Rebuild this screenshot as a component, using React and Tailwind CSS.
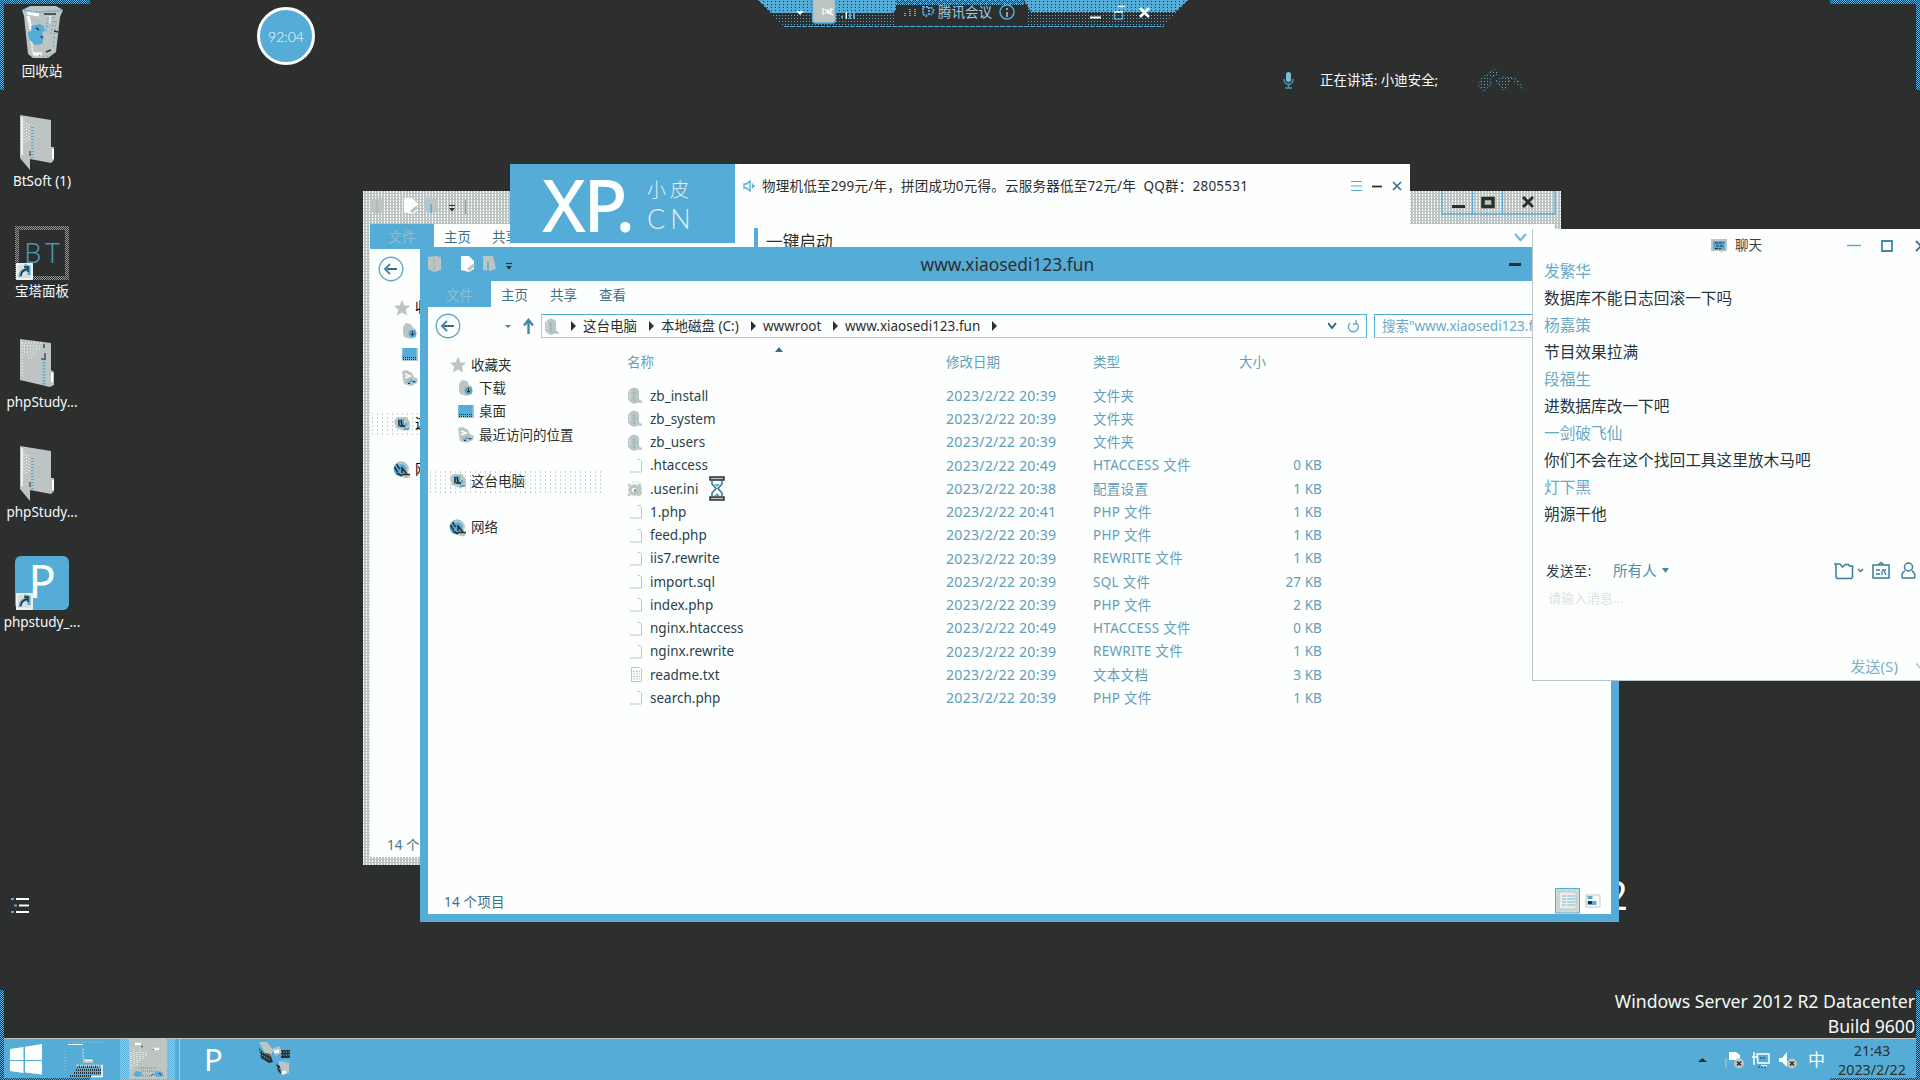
import React from "react";

const checker = "bg-[repeating-conic-gradient(#2d2f2e_0_25%,#55acd6_0_50%)] bg-size-[2px_2px]";
const greyDots = "bg-[conic-gradient(#bcc5c3_0_75%,#fdfffe_0_100%)] bg-size-[3px_3px]";
const faintDots = "bg-[radial-gradient(#bcc5c3_0.6px,transparent_0.7px)] bg-size-[5px_4px]";

const files = [
  ["zb_install", "2023/2/22 20:39", "文件夹", "", "folder"],
  ["zb_system", "2023/2/22 20:39", "文件夹", "", "folder"],
  ["zb_users", "2023/2/22 20:39", "文件夹", "", "folder"],
  [".htaccess", "2023/2/22 20:49", "HTACCESS 文件", "0 KB", "page"],
  [".user.ini", "2023/2/22 20:38", "配置设置", "1 KB", "gear"],
  ["1.php", "2023/2/22 20:41", "PHP 文件", "1 KB", "page"],
  ["feed.php", "2023/2/22 20:39", "PHP 文件", "1 KB", "page"],
  ["iis7.rewrite", "2023/2/22 20:39", "REWRITE 文件", "1 KB", "page"],
  ["import.sql", "2023/2/22 20:39", "SQL 文件", "27 KB", "page"],
  ["index.php", "2023/2/22 20:39", "PHP 文件", "2 KB", "page"],
  ["nginx.htaccess", "2023/2/22 20:49", "HTACCESS 文件", "0 KB", "page"],
  ["nginx.rewrite", "2023/2/22 20:39", "REWRITE 文件", "1 KB", "page"],
  ["readme.txt", "2023/2/22 20:39", "文本文档", "3 KB", "text"],
  ["search.php", "2023/2/22 20:39", "PHP 文件", "1 KB", "page"],
];

const chat = [
  ["发繁华", "数据库不能日志回滚一下吗"],
  ["杨嘉策", "节目效果拉满"],
  ["段福生", "进数据库改一下吧"],
  ["一剑破飞仙", "你们不会在这个找回工具这里放木马吧"],
  ["灯下黑", "朔源干他"],
];

function SmallFolder({ className = "" }) {
  return (
    <svg className={`shrink-0 ${className}`} width="16" height="17" viewBox="0 0 16 17">
      <path d="M1 4.500 4 1.500 7 .5l4 1.500 1 2v8l3 2.500V16l-4-.5-4 1.500-4-2-2-3z" fill="#bcc5c3" />
      <path d="M7 5v10" stroke="#55acd6" strokeDasharray="1.500 1" />
      <path d="M3 4v8" stroke="#fdfffe" strokeDasharray="1 1" />
    </svg>
  );
}

function FileIcon({ kind }) {
  if (kind === "folder") return <SmallFolder />;
  if (kind === "gear")
    return (
      <svg className="shrink-0" width="16" height="17" viewBox="0 0 16 17">
        <path d="M5 2h7l2.500 2.500V15H9" fill="none" stroke="#bcc5c3" strokeDasharray="1 1" />
        <circle cx="7" cy="10" r="4" fill="#fdfffe" stroke="#bcc5c3" strokeWidth="3.500" />
        <path d="M1 6l2-2m8 0 2 2v8l-3 2M1 14l2 2" stroke="#bcc5c3" strokeWidth="2" fill="none" />
        <path d="M7 9h2v3H7z" fill="#55acd6" />
      </svg>
    );
  return (
    <svg className="shrink-0" width="16" height="17" viewBox="0 0 16 17">
      {kind === "text" ? (
        <g fill="none" stroke="#bcc5c3">
          <path d="M4.500 1.500h8l2 2v12h-10z" />
          <path d="M6 5.500h7M6 8h7M6 10.500h7M6 13h7" strokeDasharray="2 1" />
        </g>
      ) : (
        <path d="M11 2.500h2l1.500 2v10.500H3" fill="none" stroke="#bcc5c3" />
      )}
    </svg>
  );
}

function NavIcon({ kind }) {
  return (
    <svg className="shrink-0" width="18" height="18" viewBox="0 0 18 18">
      {kind === "star" && (
        <path d="M9 .8l2.300 5.400 6 .5-4.500 3.900 1.400 5.900L9 13.400l-5.200 3.100 1.400-5.900L.8 6.700l6-.5z" fill="#bcc5c3" />
      )}
      {kind === "download" && (
        <g>
          <path d="M2 5l3-4 5 1 2 4 3 2v7l-5 2-7-2-1-4z" fill="#bcc5c3" />
          <circle cx="11.500" cy="11.500" r="4" fill="#55acd6" />
          <path d="M11.500 9v4m-2-1.500 2 2 2-2" stroke="#2d2f2e" fill="none" />
        </g>
      )}
      {kind === "desktop" && (
        <g>
          <path d="M1 3h16v13H1z" fill="#bcc5c3" />
          <path d="M1.500 3h14v11.500h-14z" fill="#55acd6" />
          <path d="M2 12.500h13M2 14.500h13" stroke="#2d2f2e" strokeDasharray="1 1" />
        </g>
      )}
      {kind === "recent" && (
        <g>
          <path d="M1 2l5-1 5 3 2 4 4 2-1 4-6 3-7-2-1-5z" fill="#bcc5c3" />
          <path d="M4 5l5 2-5 2" fill="none" stroke="#fdfffe" strokeWidth="1.500" />
          <path d="M6 13h3l1-2 2 2h3" fill="none" stroke="#55acd6" strokeWidth="1.500" />
          <path d="M7 14.500h2m3-2h2" stroke="#2d2f2e" />
        </g>
      )}
      {kind === "pc" && (
        <g>
          <path d="M1 6l3-4h9l4 5v7l-5 2-9-3z" fill="#bcc5c3" />
          <path d="M5 4h6v8H5z" fill="#55acd6" />
          <path d="M6 5v6m2-6 1 5 3 2M7 11h5" fill="none" stroke="#2d2f2e" strokeWidth="1.500" />
          <path d="M11 14h5M13 8v3" stroke="#55acd6" strokeWidth="2" />
        </g>
      )}
      {kind === "network" && (
        <g>
          <circle cx="8" cy="8" r="7.500" fill="#55acd6" />
          <path d="M4 4l3-2 5 1 3 4-1 4" fill="none" stroke="#bcc5c3" strokeWidth="2.200" />
          <path d="M1.500 6l3 5M4 3l1 3 2 2M4 12l5 3M9 6v6m0-5 5 6" fill="none" stroke="#2d2f2e" strokeWidth="1.500" />
          <path d="M10 13h7v3l-3 1.500-4-1z" fill="#bcc5c3" />
          <path d="M9 13.500h8" stroke="#2d2f2e" strokeWidth="1.500" />
        </g>
      )}
    </svg>
  );
}

function BackButton() {
  return (
    <svg className="shrink-0" width="26" height="26" viewBox="0 0 26 26" fill="none">
      <circle cx="13" cy="13" r="11.800" stroke="#68a8c5" strokeWidth="1.400" fill="#fdfffe" />
      <path d="M19 13H8m4-5-5 5 5 5" stroke="#4b87a4" strokeWidth="2" />
      <path d="M18 13H9" stroke="#2d2f2e" strokeDasharray="2 1" />
    </svg>
  );
}

function QuickTools() {
  return (
    <svg className="shrink-0" width="90" height="22" viewBox="0 0 90 22">
      <path d="M0 4l8-1 5 1v13l-7 2-6-3z" fill="#bcc5c3" />
      <path d="M6 6v11" stroke="#55acd6" strokeDasharray="1 1" />
      <path d="M33 3h8l5 5v8l-5 3-8-2z" fill="#fdfffe" />
      <path d="M40 17l6-5" stroke="#bcc5c3" strokeWidth="3" />
      <path d="M55 3h10l3 13-6 2-7-1z" fill="#bcc5c3" />
      <path d="M60 9v9" stroke="#55acd6" strokeWidth="1.500" />
      <path d="M78 10.500h6" stroke="#2d2f2e" strokeWidth="1.200" />
      <path d="M78 13h6l-3 3.500z" fill="#2d2f2e" />
    </svg>
  );
}

function Arrow() {
  return (
    <svg className="shrink-0" width="5" height="10" viewBox="0 0 5 10">
      <path d="M0 0l5 5-5 5z" fill="#2d2f2e" />
    </svg>
  );
}

function FolderBig({ zip }) {
  return (
    <svg width="36" height="56" viewBox="0 0 36 56">
      {zip ? (
        <g>
          <path d="M1 0l31 4v27l3 2v13l-4 2-30-7z" fill="#bcc5c3" />
          <path d="M3 3v34" stroke="#fdfffe" strokeDasharray="1 2" />
          <path d="M3 4h20M5 7h18M5 10h16M5 13h14M8 16h9M9 19h5" stroke="#fdfffe" strokeDasharray="1 2" />
          <path d="M25 20v26" stroke="#55acd6" strokeWidth="2.500" strokeDasharray="1.500 1.500" />
          <path d="M25 5v4m1 5v7m-4-1h3" stroke="#2d2f2e" strokeWidth="1.200" />
          <path d="M33 34v9" stroke="#fdfffe" strokeWidth="2" />
        </g>
      ) : (
        <g>
          <path d="M1 0l31 5v27h3v13l-3 3-21-4v11L1 43z" fill="#bcc5c3" />
          <path d="M3 2v38" stroke="#fdfffe" strokeWidth="1.500" />
          <path d="M5 6v24M7.500 8v20M10 9v17" stroke="#fdfffe" strokeDasharray="1 2" />
          <path d="M13.500 12v31" stroke="#55acd6" strokeWidth="3" strokeDasharray="1 2" />
          <path d="M11 36v5" stroke="#2d2f2e" />
          <path d="M34 34v10" stroke="#fdfffe" strokeWidth="2" />
        </g>
      )}
    </svg>
  );
}

function Shortcut() {
  return (
    <svg className="absolute bottom-0 left-px" width="17" height="17" viewBox="0 0 17 17">
      <path d="M0 0h17v17H0z" fill="#d9dfdd" />
      <path d="M1 1h15v15H1z" fill="none" stroke="#fdfffe" />
      <path d="M4 14c0-5 2-7 6-7V3l3 1v8" fill="none" stroke="#55acd6" strokeWidth="3" />
      <path d="M5 13c0-4 2-6 6-7M8 4h4v5" fill="none" stroke="#2d2f2e" strokeWidth="1.500" />
    </svg>
  );
}

function DesktopItem({ label, pad, children }) {
  return (
    <div className="flex h-[110.2px] w-[84px] flex-col items-center">
      <div className={`flex h-[61px] w-[54px] shrink-0 items-start ${pad}`}>{children}</div>
      <div className="h-5 whitespace-nowrap text-[13.5px] leading-5 text-[#f4f9fb]">{label}</div>
    </div>
  );
}

function Desktop() {
  return (
    <div className="absolute left-0 top-0 flex flex-col">
      <DesktopItem label="回收站" pad="pt-[6px] pl-[7px]">
        <svg width="42" height="52" viewBox="0 0 42 52">
          <path d="M0 4l8-4h26l7 4-3 7-4 35-8 6H11l-5-4L2 10z" fill="#bcc5c3" />
          <path d="M2 4l10 2 24-1 4-1" fill="none" stroke="#55acd6" strokeWidth="1.500" strokeDasharray="2 1" />
          <path d="M5 7l12 2M6 10l3 12M11 48h9" stroke="#fdfffe" strokeWidth="3" />
          <path d="M8 22l3 26M28 10v8" stroke="#fdfffe" strokeWidth="2" strokeDasharray="1 1" />
          <path d="M22 8h12" stroke="#2d2f2e" strokeWidth="1.500" />
          <path d="M9 20l9-2 4 3 1 3-3 3 2 4-2 7-7 1-6-6-1-7 4-2z" fill="#55acd6" />
          <path d="M26 12l-2 14m8-15-3 17m5-13-3 26m-14 8 7 2 7-3M20 20h8" stroke="#55acd6" strokeWidth="1.500" strokeDasharray="1.500 2.500" fill="none" />
          <path d="M14 22l3 2m2 6 1 2m12-7 4 1m-12 20 5-2" stroke="#2d2f2e" strokeWidth="1.500" />
        </svg>
      </DesktopItem>
      <DesktopItem label="BtSoft (1)" pad="pt-[5px] pl-[4px]"><FolderBig /></DesktopItem>
      <DesktopItem label="宝塔面板" pad="pt-[6px]">
        <div className={`relative h-[54px] w-[54px] p-1 ${checker}`}>
          <div className="flex h-[46px] items-center justify-center bg-[#2d2f2e] pl-1 font-['Noto_Sans'] text-[27px] font-light tracking-[4px] text-[#4a94b7]">BT</div>
          <Shortcut />
        </div>
      </DesktopItem>
      <DesktopItem label="phpStudy..." pad="pt-[8px] pl-[4px]"><FolderBig zip /></DesktopItem>
      <DesktopItem label="phpStudy..." pad="pt-[5px] pl-[4px]"><FolderBig /></DesktopItem>
      <DesktopItem label="phpstudy_..." pad="pt-[5px]">
        <div className="relative flex h-[54px] w-[54px] items-center justify-center rounded-md bg-[#55acd6] pb-1 font-['Noto_Sans'] text-[45px] leading-none text-[#fdfffe]">
          P
          <Shortcut />
        </div>
      </DesktopItem>
    </div>
  );
}

function MeetingBar() {
  return (
    <div className="absolute left-[758px] top-0 h-[28px] w-[430px]">
      <svg className="absolute inset-0" width="430" height="28" viewBox="0 0 430 28">
        <defs>
          <pattern id="dither" width="2" height="2" patternUnits="userSpaceOnUse">
            <path d="M0 0h1v1H0zM1 1h1v1H1z" fill="#55acd6" />
          </pattern>
          <pattern id="sparse" width="3" height="3" patternUnits="userSpaceOnUse">
            <path d="M0 0h1v1H0z" fill="#55acd6" />
          </pattern>
          <pattern id="dense" width="4" height="3" patternUnits="userSpaceOnUse">
            <path d="M0 0h4v3H0z" fill="#55acd6" />
            <path d="M1 1h1v1H1z" fill="#2d2f2e" />
          </pattern>
        </defs>
        <path d="M0 0h430l-22 24-4 3H28l-5-2z" fill="url(#sparse)" />
        <path d="M0 0h138v10l-4 3H14zM266 0h164l-13 12H273z" fill="url(#dense)" />
        <path d="M138 0h128v5H138z" fill="url(#dither)" />
        <path d="M138 6h130v19H138z" fill="#2d2f2e" />
        <path d="M26 26.500h380" stroke="#55acd6" strokeDasharray="5 1" />
        <path d="M38 11h8l-4 4z" fill="#fdfffe" />
        <rect x="54.500" y="-5" width="23" height="28" rx="3" fill="#bcc5c3" stroke="#55acd6" strokeWidth="1.500" />
        <path d="M65 8v7m2-6 4 5m0-5-4 5m6-6v7m2-6-5 3 5 3" stroke="#fdfffe" fill="none" strokeWidth="1.200" />
        <path d="M84 18v-2m4 3v-7m4 7v-9m4 9V9" stroke="#55acd6" strokeWidth="2" />
        <path d="M88.500 12v7" stroke="#fdfffe" />
        <path d="M147 16v-4m5 4V9m5 7V9" stroke="#55acd6" strokeWidth="2" strokeDasharray="1 1" />
        <path d="M165 7h6v7l-3 2-3-2zM173 7l3 4-3 4" fill="none" stroke="#55acd6" strokeWidth="2" strokeDasharray="2 1" />
        <circle cx="249" cy="12" r="7" fill="none" stroke="#55acd6" strokeWidth="1.500" />
        <path d="M249 8v2m0 2v5" stroke="#bcc5c3" strokeWidth="1.500" />
        <path d="M332 17.500h11" stroke="#fdfffe" strokeWidth="2" />
        <path d="M360 6.500h7M356 12h9" stroke="#fdfffe" strokeWidth="1.600" fill="none" />
        <path d="M356.500 13v6h8v-6" stroke="#55acd6" strokeWidth="1.500" fill="none" />
        <path d="M382 8l9 9m0-9-9 9" stroke="#fdfffe" strokeWidth="2.500" />
      </svg>
      <div className="relative pl-[180px] text-[13.5px] leading-6 text-[#9ccbe2]">腾讯会议</div>
    </div>
  );
}

function BackWindow() {
  return (
    <div className={`absolute left-[363px] top-[191px] flex h-[674px] w-[1198px] flex-col ${greyDots} px-[7px] pb-[8px]`}>
      <div className="flex h-[33px] shrink-0 items-start">
        <div className="pl-[1px] pt-[4px]"><QuickTools /></div>
        <div className="ml-[4px] mt-[9px] h-[14px] w-px bg-[#55acd6]" />
        <svg className="ml-auto mr-[-4px]" width="117" height="24" viewBox="0 0 117 24">
          <path d="M1 0v23h113V0M31.500 0v23M61.500 0v23" fill="none" stroke="#55acd6" strokeWidth="1.300" />
          <path d="M11 15.500h13" stroke="#2d2f2e" strokeWidth="3" />
          <path d="M42 7.500h10v8H42z" fill="#bcc5c3" stroke="#2d2f2e" strokeWidth="3.500" />
          <path d="M82 6l10 10m0-10L82 16" stroke="#2d2f2e" strokeWidth="3" />
        </svg>
      </div>
      <div className="flex h-[25px] shrink-0 items-center bg-[#fdfffe] text-[13.5px] text-[#3f7088]">
        <div className="flex h-full w-[64px] items-center justify-center bg-[#55acd6] pt-[2px] text-[#8fbdd0]">文件</div>
        <span className="ml-[10px] pt-[2px]">主页</span>
        <span className="ml-[21px] pt-[2px]">共享</span>
        <svg className="ml-auto mr-[27px]" width="13" height="10" viewBox="0 0 13 10"><path d="M1 2l5.500 6L12 2" fill="none" stroke="#7db8d0" strokeWidth="2.200" /></svg>
      </div>
      <div className="flex grow flex-col bg-[#fdfffe] text-[13.5px] leading-[23.3px]">
        <div className="flex h-[47px] items-center pb-[8px] pl-[8px]"><BackButton /></div>
        <div className="flex items-center gap-1 pl-[23px]"><NavIcon kind="star" />收藏夹</div>
        <div className="flex h-[23.3px] items-center pl-[31px]"><NavIcon kind="download" /></div>
        <div className="flex h-[23.3px] items-center pl-[31px]"><NavIcon kind="desktop" /></div>
        <div className="flex h-[23.3px] items-center pl-[31px]"><NavIcon kind="recent" /></div>
        <div className="h-[23px]" />
        <div className={`flex items-center gap-1 pl-[23px] ${faintDots}`}><NavIcon kind="pc" />这台电脑</div>
        <div className="h-[23px]" />
        <div className="flex items-center gap-1 pl-[23px]"><NavIcon kind="network" />网络</div>
        <div className="mt-auto pl-[17px] leading-6 text-[#46788f]">14 个项目</div>
      </div>
    </div>
  );
}

function PromoWindow() {
  return (
    <div className="absolute left-[510px] top-[164px] flex h-[90px] w-[900px] items-start overflow-hidden bg-[#fdfffe]">
      <div className="flex h-[79px] w-[225px] shrink-0 items-center bg-[#55acd6] pl-[32px] text-[#fdfffe]">
        <span className="w-[88px] whitespace-nowrap font-['Noto_Sans'] text-[72px] font-medium leading-[82px] tracking-[-2.500px]">XP.</span>
        <div className="ml-[17px] flex flex-col pt-[4px] text-[#e4eff3]">
          <span className="text-[19px] font-light leading-[26px] tracking-[4px]">小皮</span>
          <span className="font-['Lato'] text-[27px] font-light leading-[32px] tracking-[5px]">CN</span>
        </div>
      </div>
      <div className="flex grow flex-col">
        <div className="flex h-[44px] items-center pl-[8px] text-[#3a4f59]">
          <svg width="13" height="14" viewBox="0 0 13 14" fill="none" stroke="#55acd6" strokeWidth="1.300"><path d="M1 5h2.500L7 2v10L3.500 9H1zM9 4.500l1 2.500-1 2.500M11 6v2" /></svg>
          <span className="ml-[6px] whitespace-pre text-[13.5px] tracking-[0.230px] text-[#2d2f2e]">物理机低至299元/年，拼团成功0元得。云服务器低至72元/年  QQ群：2805531</span>
          <svg className="ml-auto mr-[8px]" width="52" height="12" viewBox="0 0 52 12" fill="none">
            <path d="M1 1.500h11M1 6h11M1 10.500h11" stroke="#55acd6" />
            <path d="M22 6.500h10" stroke="#2d2f2e" strokeWidth="1.800" />
            <path d="M43 2l8 8m0-8-8 8" stroke="#386f8a" strokeWidth="1.700" />
          </svg>
        </div>
        <div className="flex items-start pl-[19px] pt-[20px]">
          <div className="h-[30px] w-[4px] bg-[#55acd6]" />
          <span className="ml-[8px] text-[16.7px] leading-[28px] text-[#2d2f2e]">一键启动</span>
        </div>
      </div>
    </div>
  );
}

function SideItem({ kind, label, nested, active }) {
  return (
    <div className={`flex h-[23.2px] items-center gap-[4px] ${nested ? "pl-[29px]" : "pl-[21px]"} ${active ? faintDots : ""}`}>
      <NavIcon kind={kind} />
      <span>{label}</span>
    </div>
  );
}

function Explorer() {
  return (
    <div className="absolute left-[420px] top-[247px] flex h-[675px] w-[1199px] flex-col bg-[#55acd6] px-[8px] pb-[8px]">
      <div className="flex h-[34px] shrink-0 items-center">
        <div className="w-[492.500px] pb-[1px]"><QuickTools /></div>
        <span className="w-[300px] font-['Noto_Sans'] text-[17.350px] leading-[34px] text-[#2d2f2e]">www.xiaosedi123.fun</span>
        <div className="ml-auto mr-[90px] h-[3px] w-[12px] bg-[#2d2f2e]" />
      </div>
      <div className="flex h-[26px] shrink-0 items-center bg-[#fdfffe] text-[13.5px] text-[#3f7088]">
        <div className="flex h-full w-[63px] items-center justify-center bg-[#55acd6] pt-[2px] text-[#8fbdd0]">文件</div>
        <span className="ml-[10px] pt-[2px]">主页</span>
        <span className="ml-[22px] pt-[2px]">共享</span>
        <span className="ml-[22px] pt-[2px]">查看</span>
      </div>
      <div className="flex h-[38px] shrink-0 items-center bg-[#fdfffe] pl-[7px] text-[13.5px] text-[#2d2f2e]">
        <BackButton />
        <svg className="ml-[44px]" width="36" height="18" viewBox="0 0 36 18" fill="none">
          <path d="M0 8h6l-3 3z" fill="#3f87a8" />
          <path d="M23.500 17V3m-4.500 5.500L23.500 3 28 8.500" stroke="#4387a6" strokeWidth="2.400" />
        </svg>
        <div className="flex h-[24px] w-[826px] items-center border border-t-[#55acd6] border-r-[#55acd6] border-b-[#bcc5c3] border-l-[#bcc5c3] pl-[2px]">
          <SmallFolder />
          <span className="w-[11px]" /><Arrow />
          <span className="w-[73px] whitespace-nowrap pl-[7px]">这台电脑</span><Arrow />
          <span className="w-[97px] whitespace-nowrap pl-[7px]">本地磁盘 (C:)</span><Arrow />
          <span className="w-[77px] pl-[7px]">wwwroot</span><Arrow />
          <span className="w-[154px] whitespace-nowrap pl-[7px]">www.xiaosedi123.fun</span><Arrow />
          <svg className="ml-auto mr-[6px]" width="32" height="14" viewBox="0 0 32 14" fill="none">
            <path d="M0 4l4 5 4-5" stroke="#2f637b" strokeWidth="2" />
            <path d="M28 3.500A5 5 0 1 1 22 4M28 1v4h-3" stroke="#68a8c5" strokeWidth="1.400" />
          </svg>
        </div>
        <div className="ml-[7px] flex h-[24px] grow items-center overflow-hidden border border-t-[#55acd6] border-b-[#bcc5c3] border-l-[#55acd6] border-r-[#bcc5c3] pl-[7px] text-[#69a9c6] whitespace-nowrap">搜索"www.xiaosedi123.fun"</div>
      </div>
      <div className="flex grow bg-[#fdfffe] text-[13.5px] text-[#2d2f2e]">
        <div className="flex w-[176px] flex-col pt-[8.500px]">
          <SideItem kind="star" label="收藏夹" />
          <SideItem kind="download" label="下载" nested />
          <SideItem kind="desktop" label="桌面" nested />
          <SideItem kind="recent" label="最近访问的位置" nested />
          <div className="h-[23.500px]" />
          <SideItem kind="pc" label="这台电脑" active />
          <div className="h-[23px]" />
          <SideItem kind="network" label="网络" />
        </div>
        <div className="flex flex-col pl-[23px]">
          <div className="flex h-[39px] items-center pb-[5px] text-[#659fba]">
            <span className="w-[148px]">名称</span>
            <svg className="mb-[26px] w-[171px]" height="6" viewBox="0 0 171 6" preserveAspectRatio="xMinYMin"><path d="M0 6l4-5 4 5z" fill="#386f8a" /></svg>
            <span className="w-[147px]">修改日期</span>
            <span className="w-[146px]">类型</span>
            <span>大小</span>
          </div>
          {files.map(([name, date, type, size, kind]) => (
            <div key={name} className="flex h-[23.25px] items-center text-[#639db8]">
              <FileIcon kind={kind} />
              <span className="flex w-[303px] items-center pl-[7px] text-[#2b3f49]">
                {name}
                {kind === "gear" && (
                  <svg className="ml-[11px]" width="16" height="25" viewBox="0 0 16 25">
                    <path d="M1 1h14v3H1zM1 21h14v3H1z" fill="#bcc5c3" stroke="#2d2f2e" strokeWidth="1.500" />
                    <path d="M3 4v4l4 4.500L3 17v4M13 4v4l-4 4.500 4 4.500v4" fill="#fdfffe" stroke="#386f8a" strokeWidth="1.500" />
                    <path d="M5 8h6l-3 3zM5 20l3-3 3 3z" fill="#55acd6" />
                  </svg>
                )}
              </span>
              <span className="w-[147px] text-[14.2px] tracking-[0.2px]">{date}</span>
              <span className="w-[147px] tracking-[0.3px]">{type}</span>
              <span className="w-[82px] text-right tracking-[0.1px]">{size}</span>
            </div>
          ))}
        </div>
      </div>
      <div className="flex h-[25px] shrink-0 items-end bg-[#fdfffe] pl-[16px] pr-[10px] text-[13.5px] leading-[24px] text-[#3f7088]">
        <span className="grow tracking-[0.2px]">14 个项目</span>
        <svg width="46" height="26" viewBox="0 0 46 26">
          <path d="M.5 .5h24v24.500h-24z" fill="#d0d8d6" stroke="#55acd6" />
          <path d="M4 4h17v17H4z" fill="#e8eeec" stroke="#bcc5c3" />
          <path d="M7 8h4m1 0h8M7 11h4m1 0h8M7 14h4m1 0h8M7 17h4m1 0h8" stroke="#7db8d0" />
          <path d="M31 7h14v12H31z" fill="#fdfffe" stroke="#bcc5c3" />
          <path d="M32.500 8h5v3h-5zM32.500 13h9v4h-9z" fill="#55acd6" />
          <path d="M33 13h4v3h-4z" fill="#2d2f2e" />
        </svg>
      </div>
    </div>
  );
}

function ChatWindow() {
  return (
    <div className="absolute left-[1532px] top-[229px] flex h-[452px] w-[388px] flex-col overflow-hidden border-b border-l border-[#bcc5c3] bg-[#fdfffe]">
      <div className="flex h-[33px] shrink-0 items-center pl-[178px]">
        <svg width="17" height="14" viewBox="0 0 17 14"><path d="M0 0h16v12h-4l-2 2-1-2H0z" fill="#bcc5c3" /><path d="M2 2h12v9H2z" fill="#55acd6" /><path d="M4 4h9M5 7h8M4 9.500h6" stroke="#2d2f2e" strokeDasharray="3 1" /></svg>
        <span className="ml-[7px] text-[13.5px] text-[#2d3f48]">聊天</span>
        <svg className="ml-auto" width="74" height="12" viewBox="0 0 74 12" fill="none">
          <path d="M1 5.500h14" stroke="#55acd6" strokeWidth="1.500" />
          <path d="M36 1h10v10H36z" stroke="#4187a6" strokeWidth="1.800" />
          <path d="M70 1l5 5-5 5" stroke="#386f8a" strokeWidth="1.800" />
        </svg>
      </div>
      <div className="flex h-[283px] shrink-0 flex-col pl-[11px] text-[15.7px] leading-[27px]">
        <div className="mt-[-4px] flex flex-col">
          {chat.map(([who, msg]) => (
            <React.Fragment key={who}>
              <span className="text-[#69a9c6]">{who}</span>
              <span className="text-[#26343b]">{msg}</span>
            </React.Fragment>
          ))}
        </div>
      </div>
      <div className="flex h-[52px] shrink-0 items-center pl-[13px] text-[13.5px]">
        <span className="w-[67px] tracking-[0.4px] text-[#2d3f48]">发送至:</span>
        <span className="text-[14.6px] text-[#4a90b1]">所有人</span>
        <svg className="ml-[5px]" width="8" height="6" viewBox="0 0 8 6"><path d="M0 0h7L3.500 5z" fill="#4187a6" /></svg>
        <svg className="ml-auto mr-[4px]" width="82" height="18" viewBox="0 0 82 18" fill="none" stroke="#3a7c9b" strokeWidth="1.500">
          <path d="M3 16.500 2 15V4l-1-2h5l2.500 3 3-2.500h3l1 1.500h3v11l-1 1.500z" />
          <path d="M24 7l2.500 2.500L29 7" />
          <path d="M39 3h16v13H39zM44 3l3-2.500L50 3" />
          <path d="M42 8h4m2 0h4M42 12h4m2-3v4m2-4 2 4" strokeWidth="1.300" />
          <circle cx="74.500" cy="5" r="4" />
          <path d="M71 9c-3 1-3.500 4-2.500 7h12c1-3 0-6-2.500-7" />
        </svg>
      </div>
      <div className="h-[68px] pl-[15px] text-[13px] leading-[2px] text-[#dde3e1]">请输入消息…</div>
      <div className="mt-auto flex h-[30px] items-center justify-end gap-[18px] pb-[2px] text-[15.2px] text-[#7fb0c6]">
        <span>发送(S)</span>
        <svg width="4" height="8" viewBox="0 0 4 8"><path d="M0 1l4 5" stroke="#bcc5c3" strokeWidth="1.500" /></svg>
      </div>
    </div>
  );
}

function Taskbar() {
  return (
    <div className="absolute bottom-0 left-0 flex h-[42px] w-[1920px] items-center border-t border-[#bcc5c3] bg-[#55acd6]">
      <svg className="ml-[10px]" width="32" height="32" viewBox="0 0 32 32" fill="#fdfffe"><path d="M0 5l13.500-2v13H0zM15 2.700 32 0v16H15zM0 17h13.500v12L0 27zM15 17h17v13.500L15 28.500z" /></svg>
      <svg className="ml-[22px]" width="42" height="38" viewBox="0 0 42 38">
        <path d="M4 3.500h15" stroke="#fdfffe" />
        <path d="M19 8v10" stroke="#d9e6ea" strokeDasharray="2 1" />
        <path d="M1 10v20M6 1h40" stroke="#bcc5c3" strokeDasharray="1 2" />
        <path d="M19 18h10v4H19z" fill="#bcc5c3" />
        <path d="M21 19.500h7" stroke="#fdfffe" />
        <path d="M13 26h22M12 29h25M10 32h27M6 35h22" stroke="#2d2f2e" strokeWidth="2" strokeDasharray="1 1" />
        <path d="M12 24.500h27" stroke="#bcc5c3" strokeWidth="2" strokeDasharray="3 1" />
        <path d="M38 24v12M27 35.500h12" stroke="#fdfffe" strokeWidth="1.500" />
      </svg>
      <div className="ml-[14px] flex h-[41px] w-[55px] justify-center bg-[repeating-conic-gradient(#55acd6_0_25%,#bcc5c3_0_50%)] bg-size-[2px_2px]">
        <svg width="38" height="40" viewBox="0 0 38 40">
          <path d="M0 0h38v40H0z" fill="#bcc5c3" />
          <path d="M6 5h6m12 5h6" stroke="#fdfffe" strokeWidth="2.500" />
          <path d="M2 13v17m3-20v18m3-15v14m3-16v12m3-10v7m3-8v6" stroke="#fdfffe" strokeDasharray="1 1" />
          <path d="M4 36l3-4 5 1 2 4-6 1zM24 36l3-4 6 1 2 4-6 1z" fill="#55acd6" />
          <path d="M10 29h18M12 32h14M14 37h8" stroke="#55acd6" strokeWidth="1.500" strokeDasharray="1 1" />
          <path d="M12 7l2 1m10 2 1 1m-3 26 2-2m6-1 2 2" stroke="#2d2f2e" />
        </svg>
      </div>
      <div className="h-[41px] w-[5px] border-r border-[#bcc5c3]" />
      <span className="ml-[24px] w-[36px] pb-[2px] font-['Noto_Sans'] text-[31px] leading-[36px] text-[#fdfffe]">P</span>
      <svg className="ml-[17px]" width="40" height="38" viewBox="0 0 40 38">
        <path d="M2 1h8l6 8-2 6-6-3zM15 8l7-3 3 6-6 4zM22 20l10 2v10l-7 2-3-8z" fill="#bcc5c3" />
        <path d="M2 7l5 5 6 1 3 8-4 1-8-5zM19 23l4 2 1 8-3-3zM24 9h9v8h-9z" fill="#2d2f2e" />
        <path d="M3 10l10 5M3 13l10 6M20 26l5 4M24 11h10M24 14h10" stroke="#55acd6" strokeDasharray="1 1.500" strokeWidth="1.500" />
        <path d="M17 11l5-1M25 32l4-1" stroke="#fdfffe" strokeWidth="3" />
        <path d="M24 20h10m-10 3h10" stroke="#bcc5c3" strokeDasharray="1 1" />
      </svg>
      <div className="ml-auto flex items-center">
        <svg width="9" height="6" viewBox="0 0 9 6"><path d="M0 5l4.500-4L9 5z" fill="#2d2f2e" /></svg>
        <svg className="ml-[18px]" width="104" height="22" viewBox="0 0 104 22" fill="none">
          <path d="M1 9v10" stroke="#bcc5c3" />
          <path d="M4 3h7l4 3v5H4z" fill="#fdfffe" />
          <circle cx="14" cy="14.500" r="5" fill="#bcc5c3" />
          <path d="M12 12.500l4 4m0-4-4 4" stroke="#2d2f2e" strokeWidth="1.500" />
          <path d="M32 5h12v9H33zM29 3v13m-2-8h5M36 17h6" stroke="#fdfffe" strokeWidth="1.500" />
          <path d="M35 9h6M33 18h9" stroke="#2d2f2e" strokeDasharray="2 1" />
          <path d="M54 9h3l5-6v15l-5-5h-3z" fill="#fdfffe" />
          <circle cx="67" cy="14.500" r="5" fill="#bcc5c3" />
          <path d="M65 12.500l4 4m0-4-4 4" stroke="#2d2f2e" strokeWidth="1.500" />
        </svg>
        <span className="ml-[-21px] w-[20px] text-[17px] leading-[40px] text-[#fdfffe]">中</span>
        <div className="ml-[7px] mr-[11px] flex w-[74px] flex-col items-center font-['Noto_Sans'] text-[14.3px] leading-[19px] text-[#2d2f2e]">
          <span>21:43</span>
          <span>2023/2/22</span>
        </div>
      </div>
    </div>
  );
}

export default function App() {
  return (
    <div className="relative h-[1080px] w-[1920px] overflow-hidden bg-[#2d2f2e] font-['Noto_Sans','Noto_Sans_CJK_SC',sans-serif]">
      <div className={`absolute left-0 top-0 h-[4px] w-[90px] ${checker}`} />
      <div className={`absolute left-0 top-0 h-[90px] w-[4px] ${checker}`} />
      <div className={`absolute right-0 top-0 h-[4px] w-[90px] ${checker}`} />
      <div className={`absolute right-0 top-0 h-[90px] w-[4px] ${checker}`} />
      <Desktop />
      <div className="absolute left-[257px] top-[7px] flex h-[58px] w-[58px] items-center justify-center rounded-full border-[3.500px] border-[#fdfffe] bg-[#55acd6] font-['Lato'] text-[14px] font-light text-[#fdfffe]">92:04</div>
      <MeetingBar />
      <div className="absolute left-[1283px] top-[67px] flex h-[26px] items-center text-[13.45px] text-[#f4f9fb]">
        <svg width="11" height="17" viewBox="0 0 11 17" fill="none"><rect x="3" y="0" width="5" height="10" rx="2.500" fill="#7dbbd8" /><path d="M1 7c0 7 9 7 9 0M5.500 12v4M2 16h7" stroke="#4a94b7" strokeWidth="1.500" /></svg>
        <span className="ml-[26px]">正在讲话: 小迪安全;</span>
        <svg className="ml-[40px]" width="46" height="23" viewBox="0 0 46 23" fill="url(#sparse)" stroke="#55acd6" strokeDasharray="1 3"><path d="M0 17l4-8 7-5 6-4 3 5-8 4 1 6-7 7zM18 12l6-4h9l-4 10-4 3zM33 9l6 1 6 10-6-5z" /></svg>
      </div>
      <svg className="absolute left-[11px] top-[897px]" width="20" height="18" viewBox="0 0 20 18"><path d="M5 2h13M8 8.500h10M5 15h13" stroke="#fdfffe" strokeWidth="2" /><path d="M0 2h3M3 8.500h3M0 15h3" stroke="#55acd6" strokeWidth="2" /></svg>
      <div className="absolute left-[1605px] top-[870px] font-['Noto_Sans'] text-[40px] leading-[50px] text-[#fdfffe]">2</div>
      <div className="absolute right-[5px] top-[989px] flex flex-col text-right font-['Noto_Sans'] text-[17.650px] leading-[25px] text-[#f4f9fb]">
        <span>Windows Server 2012 R2 Datacenter</span>
        <span>Build 9600</span>
      </div>
      <BackWindow />
      <PromoWindow />
      <Explorer />
      <ChatWindow />
      <Taskbar />
      <div className={`absolute bottom-0 left-0 h-[90px] w-[4px] ${checker}`} />
      <div className={`absolute bottom-0 left-0 h-[2px] w-[90px] ${checker}`} />
      <div className={`absolute bottom-0 right-0 h-[90px] w-[4px] ${checker}`} />
      <div className={`absolute bottom-0 right-0 h-[2px] w-[90px] ${checker}`} />
    </div>
  );
}
